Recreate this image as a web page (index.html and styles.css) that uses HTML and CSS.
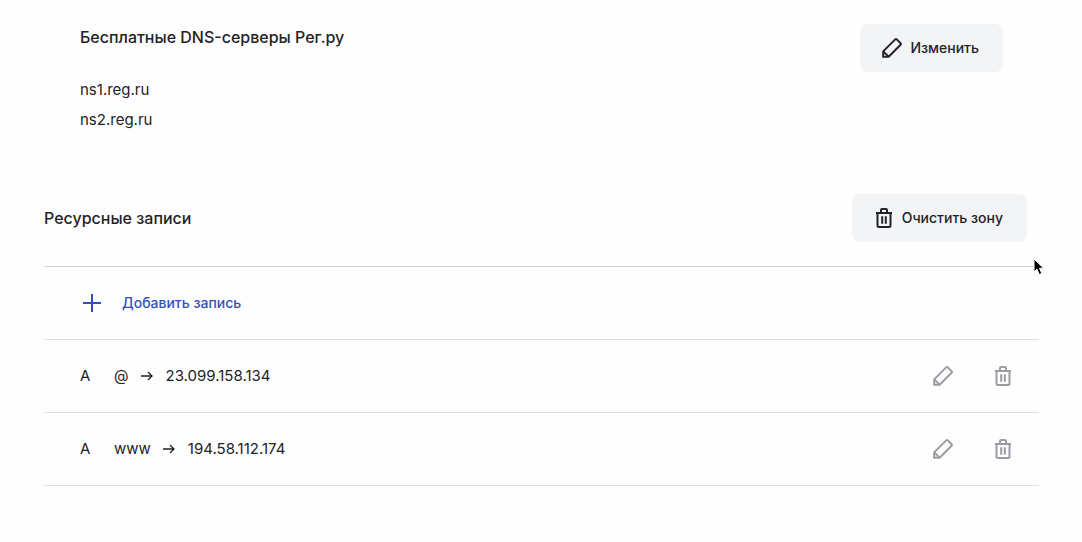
FILE: index.html
```html
<!DOCTYPE html>
<html lang="ru">
<head>
<meta charset="utf-8">
<meta name="viewport" content="width=device-width, initial-scale=1">
<title>DNS-серверы и ресурсные записи</title>
<link rel="stylesheet" href="styles.css">
</head>
<body>
<svg class="sprite" aria-hidden="true">
  <symbol id="pencil" viewBox="0 0 24 24"><path d="M3.200 20.800v-5.500L15.200 3.400q.8-.7 1.600 0l3.800 3.800q.8.800 0 1.600L8.700 20.800zM3.600 15.600l4.800 4.800"/></symbol>
  <symbol id="trash" viewBox="0 0 24 24"><path d="M4 7h16M9 6.500V4q0-1 1-1h4q1 0 1 1v2.500M5.500 7v12.500q0 1.500 1.500 1.500h10q1.500 0 1.500-1.500V7M10.200 10.200v7.600M13.800 10.200v7.600"/></symbol>
  <symbol id="plus" viewBox="0 0 24 24"><path d="M12 3v18M3 12h18"/></symbol>
  <symbol id="arrow" viewBox="0 0 12 12"><path d="M0 6h11M7 2l4 4-4 4"/></symbol>
</svg>
<main class="page">
  <section class="servers">
    <div>
      <h2 class="title">Бесплатные DNS-серверы Рег.ру</h2>
      <ul class="server-list">
        <li>ns1.reg.ru</li>
        <li>ns2.reg.ru</li>
      </ul>
    </div>
    <button class="button" type="button"><svg class="icon"><use href="#pencil"/></svg>Изменить</button>
  </section>
  <section class="records">
    <header class="records-head">
      <h2 class="title">Ресурсные записи</h2>
      <button class="button" type="button"><svg class="icon"><use href="#trash"/></svg>Очистить зону</button>
    </header>
    <button class="row add" type="button"><svg class="icon"><use href="#plus"/></svg>Добавить запись</button>
    <ul class="record-list">
      <li class="row">
        <span class="type">A</span><span>@</span><svg class="arrow"><use href="#arrow"/></svg><span>23.099.158.134</span>
        <div class="actions">
          <button class="icon-button" type="button" aria-label="Изменить запись @"><svg class="icon"><use href="#pencil"/></svg></button>
          <button class="icon-button" type="button" aria-label="Удалить запись @"><svg class="icon"><use href="#trash"/></svg></button>
        </div>
      </li>
      <li class="row">
        <span class="type">A</span><span>www</span><svg class="arrow"><use href="#arrow"/></svg><span>194.58.112.174</span>
        <div class="actions">
          <button class="icon-button" type="button" aria-label="Изменить запись www"><svg class="icon"><use href="#pencil"/></svg></button>
          <button class="icon-button" type="button" aria-label="Удалить запись www"><svg class="icon"><use href="#trash"/></svg></button>
        </div>
      </li>
    </ul>
    <svg class="cursor" viewBox="0 0 12 18" aria-hidden="true"><path d="M1 1v13l3-3 2.200 5.500 2.600-1.100-2.300-5.200h4.200z"/></svg>
  </section>
</main>
</body>
</html>
```
FILE: styles.css
```css
* { box-sizing: border-box; }
body {
  margin: 0;
  background: #fefefe;
  color: #222327;
  font: 400 15px/30px Inter, "Noto Sans", sans-serif;
}
ul { margin: 0; padding: 0; list-style: none; }
button { border: 0; color: inherit; font: inherit; cursor: pointer; }
.sprite { position: absolute; width: 0; height: 0; }
.page { padding: 24px 43px 56px 44px; }
.title { margin: 0; font-size: 16px; font-weight: 500; line-height: 24px; }
.icon {
  flex: none;
  width: 24px;
  height: 24px;
  fill: none;
  stroke: currentColor;
  stroke-width: 2;
}
.servers {
  display: flex;
  justify-content: space-between;
  align-items: flex-start;
  padding: 0 36px;
}
.servers .title { line-height: 26px; }
.server-list { padding-top: 25px; }
.button {
  display: flex;
  align-items: center;
  gap: 6px;
  height: 48px;
  padding: 0 24px 0 20px;
  border-radius: 8px;
  background: #f3f4f6;
  font-size: 14px;
  font-weight: 500;
  line-height: 24px;
}
.records { position: relative; padding-top: 59px; }
.records-head {
  display: flex;
  justify-content: space-between;
  align-items: center;
  padding: 0 12px 24px 0;
  border-bottom: 1px solid #d0d1d3;
}
.row {
  display: flex;
  align-items: center;
  width: 100%;
  height: 73px;
  padding: 0 24px 0 36px;
  border-bottom: 1px solid #e0e1e4;
}
.add {
  gap: 18px;
  background: none;
  color: #374dbc;
  font-size: 14px;
  font-weight: 500;
}
.type { width: 34px; }
.arrow {
  width: 12px;
  height: 12px;
  margin: 0 13px 0 12px;
  fill: none;
  stroke: currentColor;
  stroke-width: 1.3;
}
.actions { display: flex; gap: 36px; margin-left: auto; color: #9b9ca3; }
.icon-button { display: flex; padding: 0; background: none; }
.cursor {
  position: absolute;
  top: 123px;
  right: -6px;
  width: 12px;
  height: 18px;
  fill: #000;
  stroke: #fff;
  stroke-width: 1;
}
```
